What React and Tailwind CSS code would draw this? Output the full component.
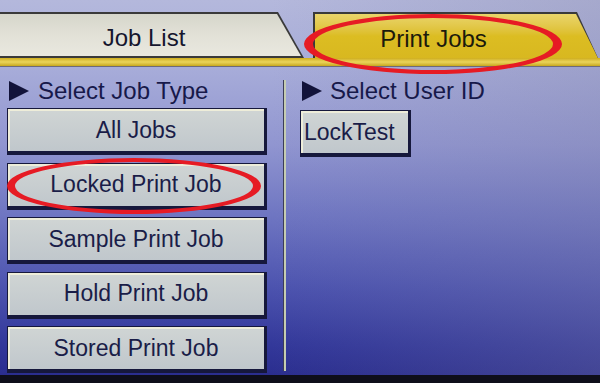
import React from "react";

const Tri = () => (
  <svg width="22" height="22" viewBox="0 0 22 22" className="shrink-0">
    <polygon points="1,1 21,11 1,21" fill="#12133a" />
  </svg>
);

const Btn = ({ children, wide = true }) => (
  <div
    className={
      (wide ? "justify-center w-[260px] " : "justify-start w-[111px] pl-[3px] ") +
      "flex items-center h-[47px] border border-[#16183c] border-r-[3px] border-b-[4px] bg-gradient-to-b from-[#d0d5d4] to-[#c0c7cc] shadow-[inset_2px_2px_0_#eeedd9] text-[23px] leading-none text-[#1a1d48]"
    }
  >
    {children}
  </div>
);

export default function App() {
  return (
    <div className="relative w-[600px] h-[383px] overflow-hidden flex flex-col font-['Liberation_Sans',Arial,sans-serif] bg-[linear-gradient(90deg,rgba(120,120,160,0)_45%,rgba(130,130,165,0.28)_100%),linear-gradient(180deg,#b4b8dc_0%,#a7acd9_18%,#9095d0_38%,#6f76c2_56%,#4e55b0_74%,#33389a_90%,#282b8c_100%)]">
      {/* Tabs */}
      <div className="flex items-end pt-[12px] h-[58px] shrink-0">
        <div className="w-[304px] h-[46px] pt-[2px] pb-[2px] bg-[#3a3a3a] [clip-path:polygon(0_0,278px_0,304px_100%,0_100%)]">
          <div className="h-full flex items-center justify-center pr-[16px] pt-[6px] bg-gradient-to-b from-[#d6d6cb] via-[#e2e1d7] to-[#e9e8df] [clip-path:polygon(0_0,277px_0,301px_100%,0_100%)] text-[24px] leading-none text-[#15162e]">
            Job List
          </div>
        </div>
        <div className="ml-[9px] w-[285px] h-[46px] pt-[2px] pl-[2px] bg-[#3a3a3a] [clip-path:polygon(0_0,264px_0,285px_100%,0_100%)]">
          <div className="h-full flex items-center justify-center pr-[46px] pt-[6px] bg-gradient-to-b from-[#ead56a] via-[#dcbd22] to-[#d8b820] [clip-path:polygon(0_0,261px_0,283px_100%,0_100%)] text-[24px] leading-none text-[#1c1a0c]">
            Print Jobs
          </div>
        </div>
      </div>
      {/* Yellow bar */}
      <div className="h-[9px] shrink-0 bg-gradient-to-b from-[#cfae1a] via-[#ead45a] to-[#c8a818] border-b border-[#6d6a7a]" />

      {/* Content */}
      <div className="flex-1 flex">
        <div className="ml-[7px] w-[260px] pt-[12px] flex flex-col">
          <div className="flex items-center gap-[8px] h-[24px] ml-[1px] text-[24px] leading-none text-[#17194a]">
            <Tri />
            <span>Select Job Type</span>
          </div>
          <div className="mt-[5px] flex flex-col gap-[7.5px]">
            <Btn>All Jobs</Btn>
            <Btn>Locked Print Job</Btn>
            <Btn>Sample Print Job</Btn>
            <Btn>Hold Print Job</Btn>
            <Btn>Stored Print Job</Btn>
          </div>
        </div>
        <div className="ml-[16px] mt-[13px] mb-[4px] w-[3px] border-l border-[#3b3d58] bg-[#c5ccb2]" />
        <div className="ml-[14px] pt-[12px] flex flex-col">
          <div className="flex items-center gap-[7px] h-[24px] ml-[1px] text-[24px] leading-none text-[#17194a]">
            <Tri />
            <span>Select User ID</span>
          </div>
          <div className="mt-[7px]">
            <Btn wide={false}>LockTest</Btn>
          </div>
        </div>
      </div>
      {/* bottom bezel */}
      <div className="h-[8px] shrink-0 bg-[#0e0e1a]" />

      {/* red hand-drawn annotation ellipses */}
      <svg className="absolute inset-0 pointer-events-none" width="600" height="383" viewBox="0 0 600 383">
        <path
          fillRule="evenodd"
          fill="#e61b24"
          d="M304,44 a129,30 0 1,0 258,0 a129,30 0 1,0 -258,0 Z M313,44 a120,26 0 1,0 240,0 a120,26 0 1,0 -240,0 Z"
        />
        <path
          fillRule="evenodd"
          fill="#e61b24"
          d="M7,186 a127,28 0 1,0 254,0 a127,28 0 1,0 -254,0 Z M15,186 a119,24 0 1,0 238,0 a119,24 0 1,0 -238,0 Z"
        />
      </svg>
    </div>
  );
}
